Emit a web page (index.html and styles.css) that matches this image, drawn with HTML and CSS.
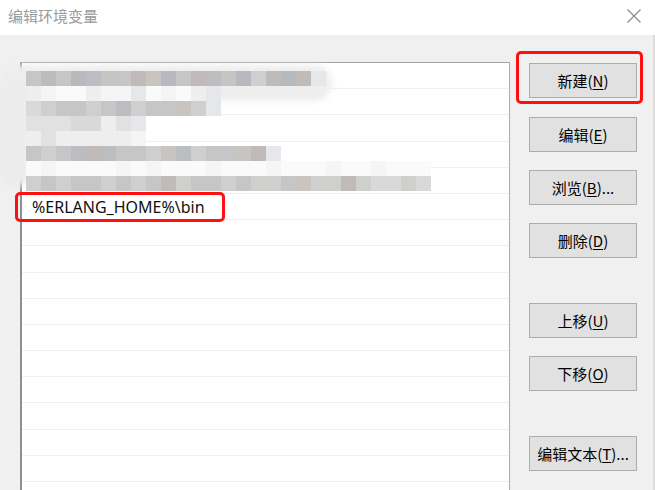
FILE: index.html
```html
<!DOCTYPE html>
<html lang="zh-CN">
<head>
<meta charset="utf-8">
<title>编辑环境变量</title>
<link rel="stylesheet" href="styles.css">
</head>
<body>
<div class="window">
  <div class="titlebar">
    <span class="title">编辑环境变量</span>
    <svg class="close" width="14" height="14" viewBox="0 0 14 14"><path d="M0.5 0.5 L13.5 13.5 M13.5 0.5 L0.5 13.5" stroke="#8a8a8a" stroke-width="1.2" fill="none"/></svg>
  </div>
  <div class="content">
    <div class="list">
      <div class="rows">
        <div class="row"></div>
        <div class="row"></div>
        <div class="row"></div>
        <div class="row"></div>
        <div class="row"></div>
        <div class="row marked"><span class="entry">%ERLANG_HOME%\bin</span></div>
        <div class="row"></div>
        <div class="row"></div>
        <div class="row"></div>
        <div class="row"></div>
        <div class="row"></div>
        <div class="row"></div>
        <div class="row"></div>
        <div class="row"></div>
        <div class="row"></div>
        <div class="row"></div>
        <div class="row"></div>
      </div>

      <span class="ring ring-text"></span>
      <div class="smear smear-top"></div>
      <div class="smear smear-left"></div>
      <div class="mosaic">
        <div class="band">
          <i class="k1"></i><i class="k3"></i><i class="k1"></i><i class="k5"></i><i class="k2"></i><i class="k6"></i><i class="k1"></i><i class="k3"></i><i class="k6"></i><i class="k5"></i><i class="k1"></i><i class="k3"></i><i class="k2"></i><i class="k6"></i><i class="k5"></i><i class="k4"></i><i class="k3"></i><i class="k5"></i><i class="k3"></i><i class="l1"></i>
        </div>
        <div class="band">
          <i class="l4"></i><i class="l5"></i><i class="l6"></i><i class="l6"></i><i class="l4"></i><i class="l5"></i><i class="l5"></i><i class="l1"></i><i class="l6"></i><i class="l5"></i><i class="l6"></i><i class="l4"></i><i class="l1"></i>
        </div>
        <div class="band">
          <i class="l2"></i><i class="k4"></i><i class="k1"></i><i class="k1"></i><i class="k4"></i><i class="k1"></i><i class="k2"></i><i class="k4"></i><i class="k1"></i><i class="k1"></i><i class="k6"></i><i class="k4"></i><i class="l1"></i>
        </div>
        <div class="band">
          <i class="l3"></i><i class="l3"></i><i class="l3"></i><i class="l2"></i><i class="l2"></i><i class="l4"></i><i class="l3"></i><i class="l1"></i>
        </div>
        <div class="band">
          <i class="l4"></i><i class="l3"></i><i class="l4"></i><i class="l4"></i><i class="l4"></i><i class="l4"></i><i class="l4"></i><i class="l5"></i>
        </div>
        <div class="band">
          <i class="k1"></i><i class="k4"></i><i class="k1"></i><i class="k2"></i><i class="k3"></i><i class="k2"></i><i class="k1"></i><i class="k1"></i><i class="k4"></i><i class="k6"></i><i class="k2"></i><i class="k4"></i><i class="k1"></i><i class="k1"></i><i class="k6"></i><i class="k3"></i><i class="l1"></i>
        </div>
        <div class="band">
          <i class="l6"></i><i class="l5"></i><i class="l6"></i><i class="l6"></i><i class="l6"></i><i class="l6"></i><i class="l5"></i><i class="l6"></i><i class="l5"></i><i class="l6"></i><i class="l6"></i><i class="l6"></i><i class="l5"></i><i class="l6"></i><i class="l6"></i><i class="l6"></i><i class="l5"></i><i class="l6"></i><i class="l6"></i><i class="l6"></i><i class="l5"></i><i class="l6"></i><i class="l6"></i><i class="l5"></i><i class="l6"></i><i class="l6"></i><i class="l6"></i>
        </div>
        <div class="band">
          <i class="k4"></i><i class="k1"></i><i class="k4"></i><i class="k1"></i><i class="k1"></i><i class="k4"></i><i class="k1"></i><i class="k4"></i><i class="k1"></i><i class="k3"></i><i class="k4"></i><i class="k1"></i><i class="k1"></i><i class="k4"></i><i class="k1"></i><i class="k4"></i><i class="k4"></i><i class="k1"></i><i class="k6"></i><i class="k4"></i><i class="k4"></i><i class="k3"></i><i class="k4"></i><i class="l2"></i><i class="l2"></i><i class="k4"></i><i class="l2"></i>
        </div>
      </div>
    </div>

    <div class="buttons">
      <div class="btn-wrap first"><button class="btn">新建(<u>N</u>)</button><span class="ring ring-btn"></span></div>
      <button class="btn">编辑(<u>E</u>)</button>
      <button class="btn">浏览(<u>B</u>)...</button>
      <button class="btn">删除(<u>D</u>)</button>
      <button class="btn sep">上移(<u>U</u>)</button>
      <button class="btn">下移(<u>O</u>)</button>
      <button class="btn sep">编辑文本(<u>T</u>)...</button>
    </div>
  </div>
</div>
</body>
</html>
```

FILE: styles.css
```css
* { box-sizing: border-box; }
html, body { margin: 0; padding: 0; }
body {
  width: 655px;
  height: 490px;
  overflow: hidden;
  background: #f0f0f0;
  font-family: "Noto Sans CJK SC", "Noto Sans", sans-serif;
}
.window {
  display: flex;
  flex-direction: column;
  height: 490px;
}
.titlebar {
  height: 35px;
  background: #ffffff;
  display: flex;
  align-items: center;
  justify-content: space-between;
  padding: 0 14px 0 8px;
  flex: none;
}
.title {
  font-size: 15px;
  color: #9a9a9a;
  line-height: 18px;
  margin-top: -3px;
}
.close {
  margin-top: -4px;
}
.content {
  flex: 1;
  min-height: 0;
  display: flex;
  align-items: stretch;
  padding: 27px 0 0 20px;
  border-right: 2px solid #dcdcdc;
}
.list {
  position: relative;
  width: 490px;
  background: #ffffff;
  border-top: 1px solid #a3a3a3;
  border-right: 1px solid #adadad;
  border-left: 2px solid #8e8e96;
  flex: none;
}
.rows {
  height: 100%;
  overflow: hidden;
}
.row {
  height: 26.2px;
  border-bottom: 1px solid #f0f0f0;
  display: flex;
  align-items: center;
  padding-left: 10px;
}
.entry {
  font-family: "Noto Sans", sans-serif;
  font-size: 16px;
  color: #111;
  line-height: 20px;
  margin-top: 1px;
}
.ring {
  position: absolute;
  border: 3px solid #ff1010;
  border-radius: 5px;
  pointer-events: none;
}
.ring-text {
  left: -7px;
  top: 129px;
  width: 210px;
  height: 30px;
}
.smear {
  position: absolute;
  background: #ececec;
  filter: blur(3px);
}
.smear-top {
  left: -22px;
  top: 2px;
  width: 332px;
  height: 36px;
  border-radius: 18px;
  background: #eeeeee;
}
.smear-left {
  left: -22px;
  top: 14px;
  width: 30px;
  height: 110px;
  border-radius: 14px;
}
.mosaic {
  position: absolute;
  left: 4px;
  top: 8px;
  display: flex;
  flex-direction: column;
}
.band {
  display: flex;
  height: 15px;
}
.band i {
  display: block;
  width: 15px;
  height: 15px;
}
.k1 { background: #c6c6c6; }
.k2 { background: #bcbdc1; }
.k3 { background: #c0bab8; }
.k4 { background: #cfcfce; }
.k5 { background: #b6b9be; }
.k6 { background: #c8c5c1; }
.l1 { background: #e6e7ea; }
.l2 { background: #d9d9d9; }
.l3 { background: #e1e1e1; }
.l4 { background: #eeeeee; }
.l5 { background: #f5f5f5; }
.l6 { background: #fafafa; }

.buttons {
  display: flex;
  flex-direction: column;
  gap: 18px;
  margin-left: 19px;
  padding-top: 1px;
}
.btn-wrap {
  position: relative;
  margin-bottom: 1px;
}
.btn {
  display: block;
  width: 108px;
  height: 35px;
  background: #e1e1e1;
  border: 1px solid #adadad;
  border-radius: 0;
  padding: 0;
  font-family: "Noto Sans CJK SC", "Noto Sans", sans-serif;
  font-size: 15px;
  color: #000;
  line-height: 20px;
}
.btn u {
  text-decoration-thickness: 1px;
  text-underline-offset: 2px;
}
.sep {
  margin-top: 27px;
}
.ring-btn {
  left: -13px;
  top: -12px;
  right: -6px;
  bottom: -6px;
}
```
